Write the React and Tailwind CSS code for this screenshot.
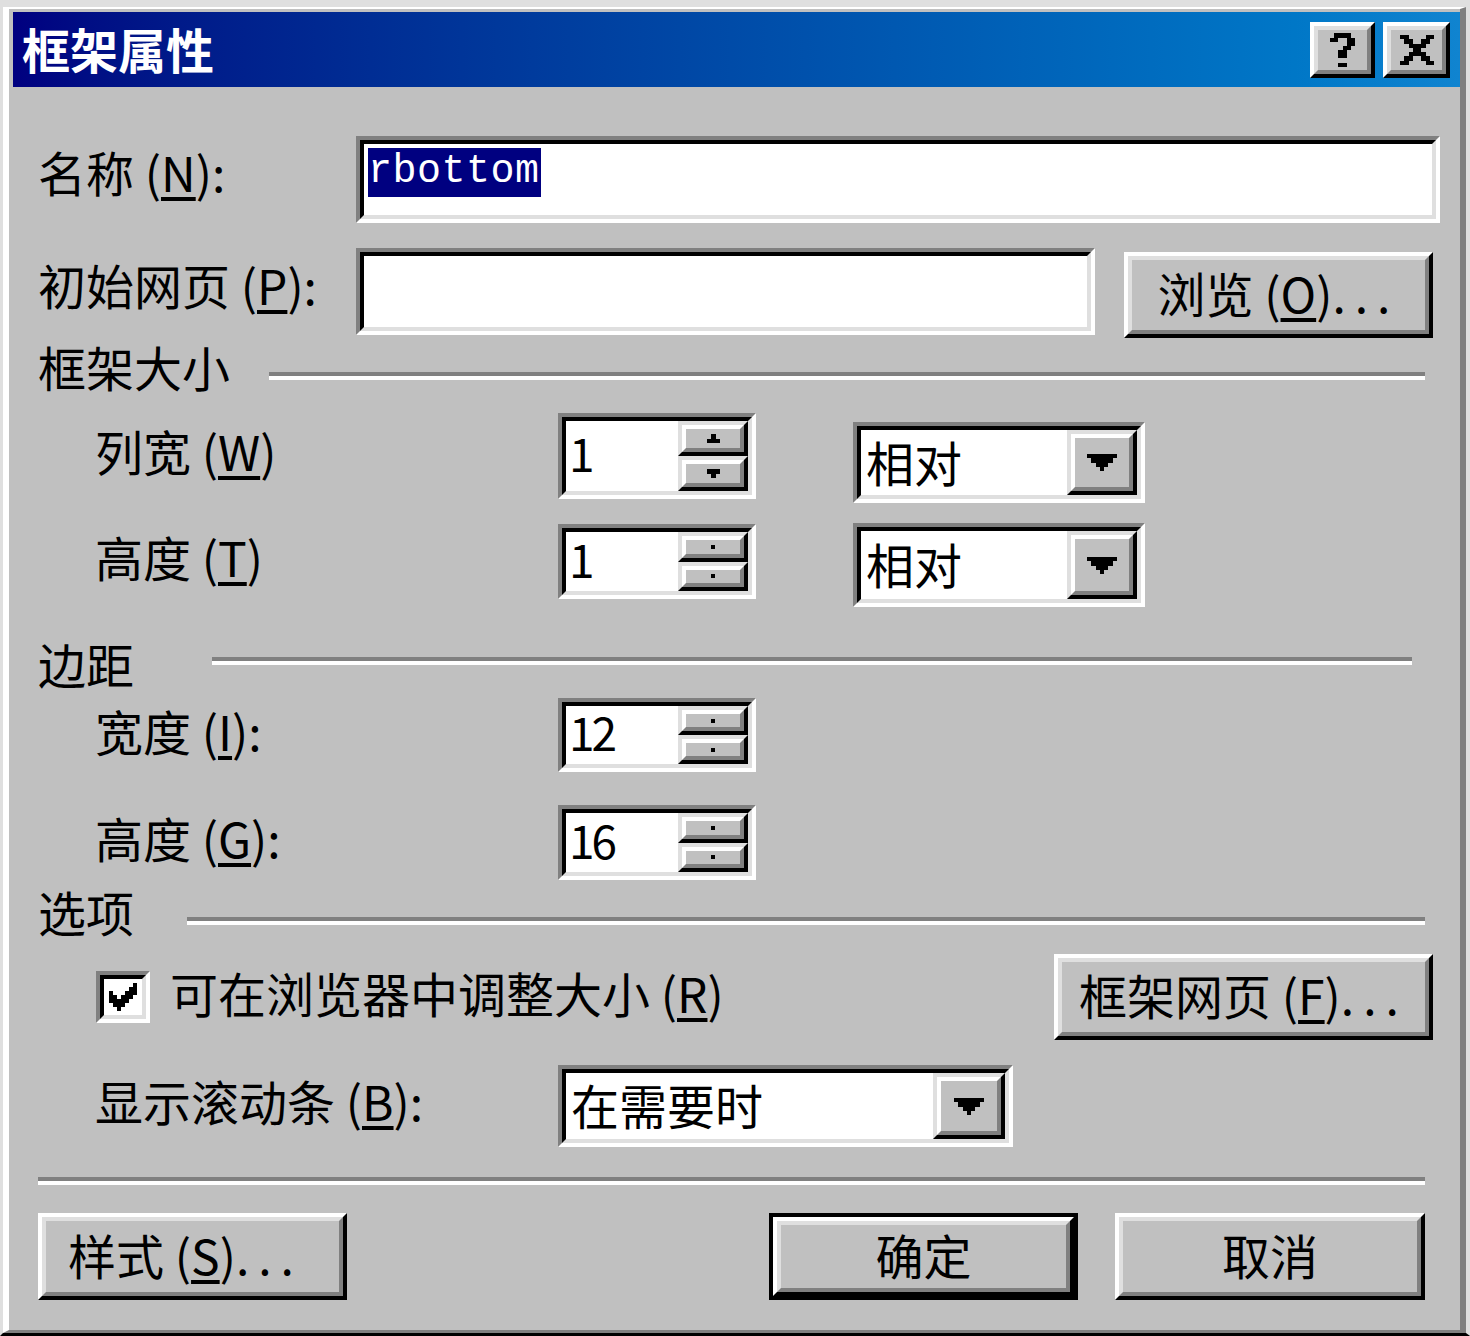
import React from 'react';

// Win98 bevel helpers
const Raised = ({ className = '', inner = '', light = false, children }) => (
  <div
    className={`border-4 ${
      light ? 'border-t-[#dfdfdf] border-l-[#dfdfdf]' : 'border-t-white border-l-white'
    } border-r-black border-b-black ${className}`}
  >
    <div
      className={`h-full w-full border-4 ${
        light ? 'border-t-white border-l-white' : 'border-t-[#dfdfdf] border-l-[#dfdfdf]'
      } border-r-[#808080] border-b-[#808080] bg-[#c0c0c0] ${inner}`}
    >
      {children}
    </div>
  </div>
);

const Sunken = ({ className = '', inner = '', children }) => (
  <div className={`border-4 border-t-[#808080] border-l-[#808080] border-r-white border-b-white ${className}`}>
    <div className={`h-full w-full border-4 border-t-black border-l-black border-r-[#dfdfdf] border-b-[#dfdfdf] bg-white ${inner}`}>
      {children}
    </div>
  </div>
);

const Groove = ({ className = '' }) => (
  <div className={`h-[8px] border-t-4 border-b-4 border-t-[#808080] border-b-white ${className}`} />
);

const Key = ({ children }) => (
  <span className="underline decoration-[4px] underline-offset-[5px]">{children}</span>
);

const Dots = () => <span className="tracking-[9px]">...</span>;

const HelpGlyph = () => (
  <svg width="25" height="34" viewBox="0 0 6 8" shapeRendering="crispEdges">
    <path d="M1 0h4v1H1zM0 1h2v1H0zM4 1h2v1H4zM4 2h2v1H4zM3 3h2v1H3zM2 4h2v1H2zM2 5h2v1H2zM2 7h2v1H2z" fill="#000" />
  </svg>
);

const CloseGlyph = () => (
  <svg width="34" height="30" viewBox="0 0 8 7" shapeRendering="crispEdges">
    <path d="M0 0h2v1H0zM6 0h2v1H6zM1 1h2v1H1zM5 1h2v1H5zM2 2h4v1H2zM3 3h2v1H3zM2 4h4v1H2zM1 5h2v1H1zM5 5h2v1H5zM0 6h2v1H0zM6 6h2v1H6z" fill="#000" />
  </svg>
);

const DownTri = () => (
  <svg width="30" height="17" viewBox="0 0 7 4" shapeRendering="crispEdges">
    <path d="M0 0h7v1H0zM1 1h5v1H1zM2 2h3v1H2zM3 3h1v1H3z" fill="#000" />
  </svg>
);

const SpinArrow = ({ up }) => (
  <svg width="13" height="9" viewBox="0 0 3 2" shapeRendering="crispEdges">
    <path d={up ? 'M1 0h1v1H1zM0 1h3v1H0z' : 'M0 0h3v1H0zM1 1h1v1H1z'} fill="#000" />
  </svg>
);

const CheckMark = () => (
  <svg width="28" height="28" viewBox="0 0 7 7" shapeRendering="crispEdges">
    <path d="M6 0h1v1H6zM5 1h2v1H5zM0 2h1v1H0zM4 2h3v1H4zM0 3h2v1H0zM3 3h3v1H3zM0 4h5v1H0zM1 5h3v1H1zM2 6h1v1H2z" fill="#000" />
  </svg>
);

const Spinner = ({ value, className = '', arrows = false }) => (
  <Sunken className={`w-[198px] ${className}`} inner="flex">
    <div className="flex flex-1 items-center pb-[8px] pl-[3px] text-[46px] leading-none tracking-[-3px]">{value}</div>
    <div className="flex w-[70px] flex-col">
      <Raised light className="flex-1" inner="flex items-center justify-center">
        {arrows ? <SpinArrow up /> : <div className="h-[4px] w-[4px] bg-black" />}
      </Raised>
      <Raised light className="flex-1" inner="flex items-center justify-center">
        {arrows ? <SpinArrow /> : <div className="h-[4px] w-[4px] bg-black" />}
      </Raised>
    </div>
  </Sunken>
);

const Combo = ({ text, className = '', btn = 'w-[70px]' }) => (
  <Sunken className={className} inner="flex">
    <div className="flex flex-1 items-center pb-[4px] pl-[5px] text-[48px] leading-none">{text}</div>
    <Raised light className={`h-full ${btn}`} inner="flex items-center justify-center">
      <DownTri />
    </Raised>
  </Sunken>
);

const Label = ({ children, className = '' }) => (
  <div className={`flex items-center whitespace-nowrap pb-[12px] text-[48px] leading-none ${className}`}>{children}</div>
);

export default function App() {
  return (
    <div className="h-[1336px] w-[1470px] border-t-[7px] border-l-[3px] border-r-4 border-b-[3px] border-t-[#dfdfdf] border-l-[#dfdfdf] border-r-[#dfdfdf] border-b-black bg-[#c0c0c0] font-['Noto_Sans_CJK_SC','Noto_Sans_CJK_TC',sans-serif] text-black">
      <div className="h-full border-t-2 border-l-[6px] border-r-[6px] border-b-[3px] border-t-white border-l-white border-r-[#808080] border-b-[#808080] pt-[3px] pl-[4px]">
        {/* Title bar */}
        <div className="flex h-[75px] items-center bg-linear-to-r from-[#000080] to-[#1084d0] pl-[9px] pr-[10px]">
          <div className="pb-[4px] text-[48px] font-bold leading-none text-white">框架属性</div>
          <Raised className="ml-auto h-[56px] w-[65px]" inner="flex items-center justify-center">
            <HelpGlyph />
          </Raised>
          <Raised className="ml-[8px] h-[56px] w-[67px]" inner="flex items-center justify-center">
            <CloseGlyph />
          </Raised>
        </div>

        <div className="pl-[25px]">
          {/* Name */}
          <div className="mt-[49px] flex h-[87px] items-start">
            <Label className="h-[82px] w-[318px]">
              名称 (<Key>N</Key>):
            </Label>
            <Sunken className="h-[87px] w-[1084px]" inner="pl-[4px] pt-[4px]">
              <div className="h-[49px] w-[173px] whitespace-nowrap bg-[#000080] font-['Liberation_Mono',monospace] text-[40px] leading-[47px] tracking-[0.5px] text-white">
                rbottom
              </div>
            </Sunken>
          </div>

          {/* Initial page */}
          <div className="mt-[25px] flex h-[90px] items-start">
            <Label className="h-[84px] w-[318px]">
              初始网页 (<Key>P</Key>):
            </Label>
            <Sunken className="h-[87px] w-[739px]" />
            <Raised className="ml-[29px] mt-[4px] h-[86px] w-[309px]" inner="flex items-center justify-center text-[48px] leading-none">
              <span className="pb-[6px]">
                浏览 (<Key>O</Key>)<Dots />
              </span>
            </Raised>
          </div>

          {/* Frame size group */}
          <div className="mt-[8px] flex h-[48px] items-start">
            <div className="-mt-[4px] text-[48px] leading-[48px]">框架大小</div>
            <Groove className="ml-[39px] mt-[26px] w-[1156px]" />
          </div>

          <div className="mt-[19px] flex h-[90px] items-start">
            <Label className="ml-[57px] h-[86px] w-[463px]">
              列宽 (<Key>W</Key>)
            </Label>
            <Spinner value="1" arrows className="h-[86px]" />
            <Combo text="相对" className="ml-[97px] mt-[9px] h-[81px] w-[292px]" />
          </div>

          <div className="mt-[20px] flex h-[84px] items-start">
            <Label className="ml-[57px] mt-[1px] h-[76px] w-[463px]">
              高度 (<Key>T</Key>)
            </Label>
            <Spinner value="1" className="mt-[1px] h-[75px]" />
            <Combo text="相对" className="ml-[97px] h-[84px] w-[292px]" />
          </div>

          {/* Margins group */}
          <div className="mt-[36px] flex h-[48px] items-start">
            <div className="-mt-[4px] text-[48px] leading-[48px]">边距</div>
            <Groove className="ml-[78px] mt-[14px] w-[1200px]" />
          </div>

          <div className="mt-[7px] flex h-[74px] items-start">
            <Label className="ml-[57px] h-[76px] w-[463px]">
              宽度 (<Key>I</Key>):
            </Label>
            <Spinner value="12" className="h-[74px]" />
          </div>

          <div className="mt-[33px] flex h-[75px] items-start">
            <Label className="ml-[57px] h-[76px] w-[463px]">
              高度 (<Key>G</Key>):
            </Label>
            <Spinner value="16" className="h-[75px]" />
          </div>

          {/* Options group */}
          <div className="mt-[11px] flex h-[48px] items-start">
            <div className="-mt-[4px] text-[48px] leading-[48px]">选项</div>
            <Groove className="ml-[53px] mt-[26px] w-[1238px]" />
          </div>

          <div className="mt-[15px] flex h-[86px] items-center">
            <Sunken className="ml-[58px] h-[52px] w-[54px]" inner="flex items-center justify-center">
              <CheckMark />
            </Sunken>
            <Label className="ml-[20px] pt-[2px]">
              可在浏览器中调整大小 (<Key>R</Key>)
            </Label>
            <Raised className="ml-auto mr-[27px] h-[86px] w-[379px]" inner="flex items-center justify-center text-[48px] leading-none">
              <span className="pb-[6px]">
                框架网页 (<Key>F</Key>)<Dots />
              </span>
            </Raised>
          </div>

          <div className="mt-[25px] flex h-[82px] items-start">
            <Label className="ml-[57px] h-[82px] w-[463px]">
              显示滚动条 (<Key>B</Key>):
            </Label>
            <Combo text="在需要时" className="h-[82px] w-[455px]" btn="w-[72px]" />
          </div>

          <Groove className="mt-[30px] w-[1387px]" />

          {/* Bottom buttons */}
          <div className="mt-[28px] flex h-[87px] items-start">
            <Raised className="h-[87px] w-[309px]" inner="flex items-center justify-center pr-[14px] text-[48px] leading-none">
              <span className="pb-[6px]">
                样式 (<Key>S</Key>)<Dots />
              </span>
            </Raised>
            <div className="ml-[422px] h-[87px] w-[309px] border-4 border-black">
              <Raised className="h-full w-full" inner="flex items-center justify-center text-[48px] leading-none">
                <span className="pb-[6px]">确定</span>
              </Raised>
            </div>
            <Raised className="ml-[37px] h-[87px] w-[310px]" inner="flex items-center justify-center text-[48px] leading-none">
              <span className="pb-[6px]">取消</span>
            </Raised>
          </div>
        </div>
      </div>
    </div>
  );
}
